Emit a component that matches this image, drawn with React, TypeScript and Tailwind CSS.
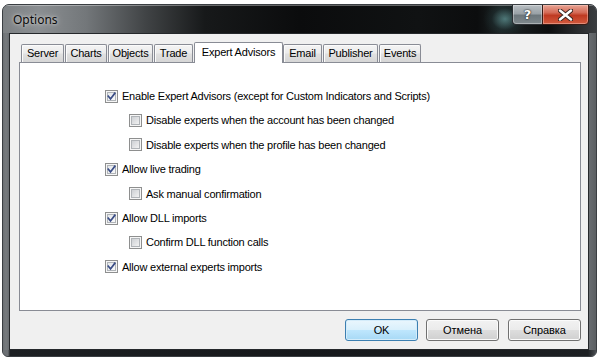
import React from "react";

const FONT = "font-['Liberation_Sans',Arial,sans-serif]";

function CheckBox({ checked }: { checked: boolean }) {
  const id = checked ? "cbc" : "cbu";
  return (
    <svg width="13" height="13" viewBox="0 0 13 13" className="shrink-0 block">
      <defs>
        <linearGradient id={id} x1="0" y1="0" x2="1" y2="1">
          {checked ? (
            <>
              <stop offset="0" stopColor="#e2e5e9" />
              <stop offset="1" stopColor="#fbfbfb" />
            </>
          ) : (
            <>
              <stop offset="0" stopColor="#cbced2" />
              <stop offset="1" stopColor="#f4f4f4" />
            </>
          )}
        </linearGradient>
      </defs>
      <rect x="0.5" y="0.5" width="12" height="12" fill="#f6f6f6" stroke="#8e8f8f" />
      <rect x="2.5" y="2.5" width="8" height="8" fill={`url(#${id})`} stroke="#b0b4b8" />
      {checked && (
        <path d="M3.3 6.2 L5.5 8.9 L9.8 3.3" fill="none" stroke="#3a4d86" strokeWidth="1.7" strokeLinecap="square" />
      )}
    </svg>
  );
}

const rows: { level: number; checked: boolean; text: string }[] = [
  { level: 0, checked: true, text: "Enable Expert Advisors (except for Custom Indicators and Scripts)" },
  { level: 1, checked: false, text: "Disable experts when the account has been changed" },
  { level: 1, checked: false, text: "Disable experts when the profile has been changed" },
  { level: 0, checked: true, text: "Allow live trading" },
  { level: 1, checked: false, text: "Ask manual confirmation" },
  { level: 0, checked: true, text: "Allow DLL imports" },
  { level: 1, checked: false, text: "Confirm DLL function calls" },
  { level: 0, checked: true, text: "Allow external experts imports" },
];

const tabs: { label: string; w: string; ml: string; selected?: boolean }[] = [
  { label: "Server", w: "w-[43px]", ml: "ml-0" },
  { label: "Charts", w: "w-[42px]", ml: "ml-[1px]" },
  { label: "Objects", w: "w-[45px]", ml: "ml-[1px]" },
  { label: "Trade", w: "w-[39px]", ml: "ml-[1px]" },
  { label: "Expert Advisors", w: "w-[89px]", ml: "ml-[1px]", selected: true },
  { label: "Email", w: "w-[39px]", ml: "ml-0" },
  { label: "Publisher", w: "w-[55px]", ml: "ml-[1px]" },
  { label: "Events", w: "w-[42px]", ml: "ml-[1px]" },
];

function Tab({ label, w, ml, selected }: { label: string; w: string; ml: string; selected?: boolean }) {
  if (selected) {
    return (
      <div
        className={`${w} ${ml} relative z-10 mb-[-1px] h-[21px] shrink-0 rounded-t-[2px] border border-b-0 border-[#898c95] bg-white flex items-center justify-center pb-[2px] text-[11px] tracking-[-0.2px] text-black`}
      >
        {label}
      </div>
    );
  }
  return (
    <div
      className={`${w} ${ml} h-[18px] shrink-0 rounded-t-[2px] border border-b-0 border-[#898c95] bg-[linear-gradient(#f4f4f4,#ececec_45%,#e0e0e0_55%,#d6d6d6)] shadow-[inset_1px_1px_0_#fbfbfb] flex items-center justify-center text-[11px] tracking-[-0.2px] text-black`}
    >
      {label}
    </div>
  );
}

function Button({ label, primary, ml }: { label: string; primary?: boolean; ml: string }) {
  return (
    <div
      className={`${ml} w-[73px] h-[22px] rounded-[3px] border flex items-center justify-center text-[11px] tracking-[-0.1px] text-black ${
        primary
          ? "border-[#3c7fb1] bg-[linear-gradient(#eaf6fd,#d9f0fc_48%,#bee6fd_52%,#a7d9f5)] shadow-[inset_0_0_0_1px_#d4ecfa]"
          : "border-[#707070] bg-[linear-gradient(#f2f2f2,#ebebeb_48%,#dddddd_52%,#cfcfcf)] shadow-[inset_0_0_0_1px_#fbfbfb]"
      }`}
    >
      {label}
    </div>
  );
}

export default function App() {
  return (
    <div className={`w-[602px] h-[361px] bg-white overflow-hidden ${FONT}`}>
      <div className="ml-[2px] mt-[4px] w-[595px] h-[353px] rounded-t-[7px] rounded-b-[6px] border border-[#3a3e42] bg-[#6e7276] overflow-hidden flex flex-col">
        {/* Title bar */}
        <div className="relative h-[28px] shrink-0 flex items-center bg-[radial-gradient(ellipse_22px_18px_at_502px_14px,rgba(120,190,190,0.55),rgba(40,70,72,0.25)_60%,transparent),linear-gradient(90deg,#7d8184_0%,#8a8e91_6%,#73777a_14%,#414446_24%,#17191a_34%,#0b0c0d_50%,#101213_70%,#0c0d0e_80%,#1c2324_84%,#0d0e0f_92%,#3a3d40_100%)] shadow-[inset_0_1px_0_rgba(255,255,255,0.35)]">
          <span className="ml-[10px] mt-[1px] font-['Noto_Sans',sans-serif] text-[12px] text-[#0a0a0a] [text-shadow:0_0_6px_#c8c8c8,0_0_3px_#d0d0d0]">
            Options
          </span>
          <div className="absolute top-[-1px] right-[7px] flex">
            <div className="w-[30px] h-[21px] rounded-bl-[4px] border border-[#2b2f33] border-r-0 bg-[linear-gradient(#b9bfc3,#9aa2a7_45%,#6d777c_55%,#7f898d)] shadow-[inset_0_0_0_1px_rgba(255,255,255,0.35)] flex items-center justify-center">
              <span className="font-['DejaVu_Sans',sans-serif] font-bold text-[13px] leading-none text-white [text-shadow:0_0_2px_#222,0_0_1px_#000]">?</span>
            </div>
            <div className="w-[47px] h-[21px] rounded-br-[4px] border border-[#3a1a14] bg-[linear-gradient(#e8a494,#d46b57_40%,#bf3a22_55%,#d35a3e)] shadow-[inset_0_0_0_1px_rgba(255,220,210,0.4)] flex items-center justify-center">
              <svg width="15" height="12" viewBox="0 0 15 12">
                <path d="M2 1.5 L13 10.5 M13 1.5 L2 10.5" stroke="#3a2520" strokeWidth="4.4" strokeLinecap="round" />
                <path d="M2 1.5 L13 10.5 M13 1.5 L2 10.5" stroke="#ffffff" strokeWidth="2.4" strokeLinecap="round" />
              </svg>
            </div>
          </div>
        </div>

        {/* Middle: side frames + client */}
        <div className="flex h-[317px] shrink-0 pl-[6px] bg-[linear-gradient(90deg,#6c7074,#777b7e_3px,#6a6e72_6px,#6a6e72_calc(100%-8px),#5b5f62)]">
          <div className="w-[580px] h-[317px] border border-[#25282b] bg-[#f0f0f0] flex flex-col">
            <div className="pt-[8px]">
              <div className="h-[20px] flex items-end pl-[11px]">
                {tabs.map((t) => (
                  <Tab key={t.label} {...t} />
                ))}
              </div>
              <div className="ml-[9px] w-[562px] h-[249px] border border-[#898c95] bg-white pt-[21px] flex flex-col">
                {rows.map((r, i) => (
                  <div
                    key={i}
                    className={`h-[24.4px] flex items-center gap-[4px] ${r.level === 0 ? "pl-[85px]" : "pl-[109px]"}`}
                  >
                    <CheckBox checked={r.checked} />
                    <span className="text-[11px] tracking-[-0.22px] text-black whitespace-nowrap">{r.text}</span>
                  </div>
                ))}
              </div>
              <div className="mt-[8px] flex justify-end pr-[7px]">
                <Button label="OK" primary ml="ml-0" />
                <Button label="Отмена" ml="ml-[8px]" />
                <Button label="Справка" ml="ml-[9px]" />
              </div>
            </div>
          </div>
        </div>

        {/* Bottom frame */}
        <div className="flex-1 bg-[linear-gradient(90deg,#6c7074_0px,#6c7074_5px,#1d2023_7px,#16181b_50%,#1d2023_calc(100%-8px),#4a4e52)]" />
      </div>
    </div>
  );
}
